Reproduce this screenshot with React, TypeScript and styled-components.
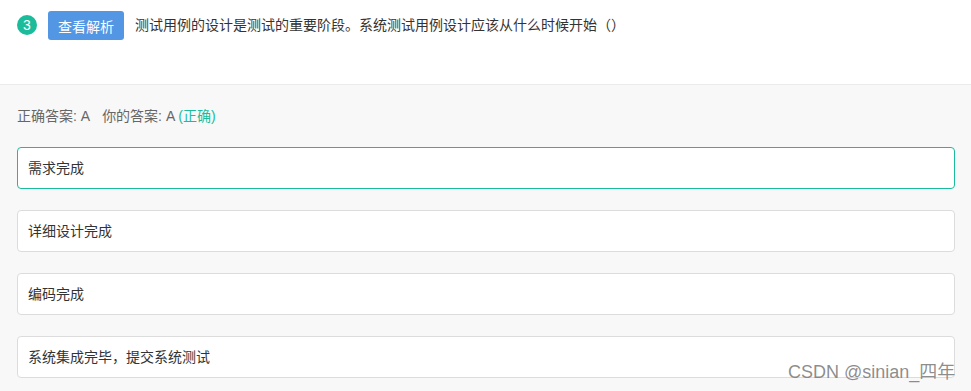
import * as React from 'react'
import styled, { createGlobalStyle } from 'styled-components'

const COLOR = {
  green: '#1abc9c',
  blue: '#5296e4',
  text: '#333333',
  sub: '#666666',
  border: '#dcdcdc',
  bg: '#f8f8f8',
}

const GlobalStyle = createGlobalStyle`
  html, body {
    margin: 0;
    padding: 0;
    background: ${COLOR.bg};
    font-family: "Liberation Sans", "Noto Sans CJK SC", sans-serif;
  }
`

interface IOption {
  label: string
  picked?: boolean
}

const options: IOption[] = [
  { label: '需求完成', picked: true },
  { label: '详细设计完成' },
  { label: '编码完成' },
  { label: '系统集成完毕，提交系统测试' },
]

const App = () => {
  return (
    <Page>
      <GlobalStyle />
      <Header>
        <Badge>3</Badge>
        <ViewButton>查看解析</ViewButton>
        <Question>测试用例的设计是测试的重要阶段。系统测试用例设计应该从什么时候开始（）</Question>
      </Header>
      <Body>
        <AnswerLine>
          正确答案: A<Gap />你的答案: A <Right>(正确)</Right>
        </AnswerLine>
        <OptionList>
          {options.map(o => (
            <Option key={o.label} picked={!!o.picked}>
              {o.label}
            </Option>
          ))}
        </OptionList>
      </Body>
      <Watermark>CSDN @sinian_四年</Watermark>
    </Page>
  )
}

const Page = styled.div`
  position: relative;
  width: 971px;
  height: 391px;
  overflow: hidden;
  background: ${COLOR.bg};
`

const Header = styled.div`
  height: 85px;
  box-sizing: border-box;
  background: #fff;
  border-bottom: 1px solid #ebebeb;
  display: flex;
  align-items: flex-start;
  padding: 11px 0 0 17px;
`

const Badge = styled.span`
  width: 20px;
  height: 20px;
  margin-top: 4px;
  border-radius: 50%;
  background: ${COLOR.green};
  color: #fff;
  font-size: 14px;
  line-height: 20px;
  text-align: center;
`

const ViewButton = styled.button`
  margin-left: 11px;
  width: 76px;
  height: 29px;
  border: none;
  border-radius: 3px;
  background: ${COLOR.blue};
  color: #fff;
  font-family: inherit;
  font-size: 14px;
  padding: 0;
`

const Question = styled.span`
  margin-left: 11px;
  margin-top: 4px;
  font-size: 14px;
  line-height: 20px;
  color: ${COLOR.text};
`

const Body = styled.div`
  padding: 21px 16px 0 17px;
`

const AnswerLine = styled.div`
  font-size: 14px;
  line-height: 20px;
  color: ${COLOR.sub};
`

const Gap = styled.span`
  display: inline-block;
  width: 12px;
`

const Right = styled.span`
  color: ${COLOR.green};
`

const OptionList = styled.div`
  margin-top: 21px;
  display: flex;
  flex-direction: column;
  gap: 21px;
`

const Option = styled.div<{ picked: boolean }>`
  height: 42px;
  box-sizing: border-box;
  background: #fff;
  border: 1px solid ${props => (props.picked ? COLOR.green : COLOR.border)};
  border-radius: 4px;
  padding: 0 10px 2px;
  display: flex;
  align-items: center;
  font-size: 14px;
  color: ${COLOR.text};
`

const Watermark = styled.div`
  position: absolute;
  left: 788px;
  top: 360px;
  font-size: 18px;
  line-height: 24px;
  color: rgba(120, 120, 120, 0.85);
`

export default App
